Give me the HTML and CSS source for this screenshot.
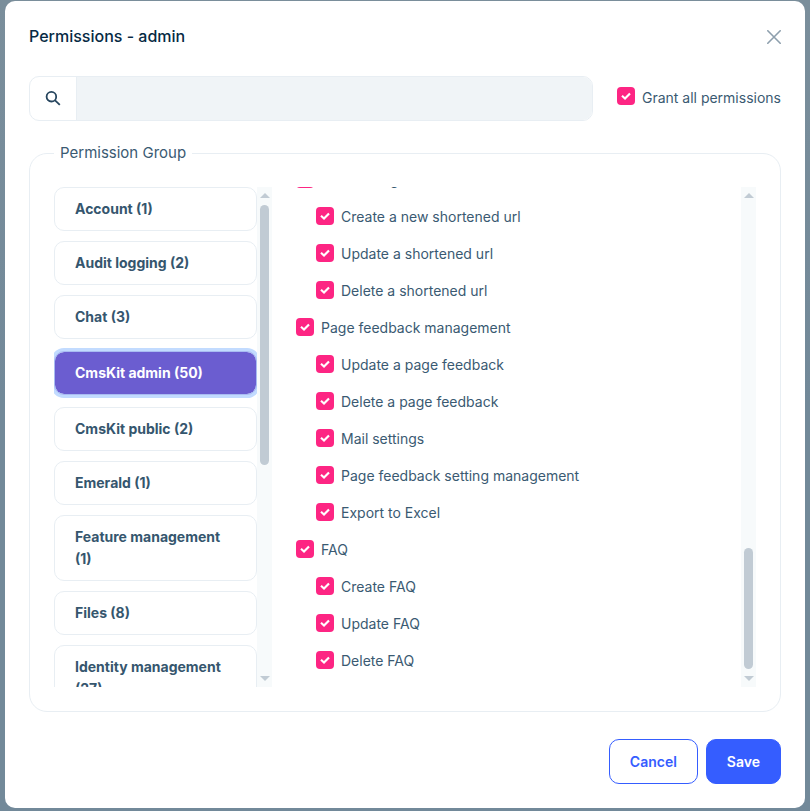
FILE: index.html
```html
<!DOCTYPE html>
<html lang="en">
<head>
    <meta charset="UTF-8">
    <meta name="viewport" content="width=device-width, initial-scale=1.0">
    <title>Permissions - admin</title>
    <link rel="stylesheet" href="styles.css">
</head>
<body>
    <div class="modal" role="dialog" aria-labelledby="modalTitle">
        <header class="modal-header">
            <h1 id="modalTitle" class="modal-title">Permissions - admin</h1>
            <button type="button" class="btn-close" aria-label="Close">
                <svg width="14" height="14" viewBox="0 0 14 14" fill="none" stroke="currentColor" stroke-width="1.6" stroke-linecap="round">
                    <path d="M.8.8l12.4 12.4M13.2.8L.8 13.2"></path>
                </svg>
            </button>
        </header>

        <form class="modal-form">
            <div class="toolbar">
                <div class="search">
                    <label class="search-icon" for="search" aria-label="Search">
                        <svg width="16" height="16" viewBox="0 0 16 16" fill="none" stroke="currentColor" stroke-width="1.8">
                            <circle cx="6.4" cy="5.7" r="4.8"></circle>
                            <path d="M9.8 9.1l5 4.8"></path>
                        </svg>
                    </label>
                    <input type="text" id="search" class="search-input">
                </div>
                <label class="check"><input type="checkbox" checked>Grant all permissions</label>
            </div>

            <fieldset class="group">
                <legend>Permission Group</legend>
                <div class="panes">
                    <div class="pane">
                        <div class="tabs">
                            <button type="button" class="tab">Account (1)</button>
                            <button type="button" class="tab">Audit logging (2)</button>
                            <button type="button" class="tab">Chat (3)</button>
                            <button type="button" class="tab active">CmsKit admin (50)</button>
                            <button type="button" class="tab">CmsKit public (2)</button>
                            <button type="button" class="tab">Emerald (1)</button>
                            <button type="button" class="tab">Feature management (1)</button>
                            <button type="button" class="tab">Files (8)</button>
                            <button type="button" class="tab">Identity management (27)</button>
                        </div>
                        <div class="scrollbar" aria-hidden="true">
                            <span class="arrow up"></span>
                            <div class="track"><div class="thumb"></div></div>
                            <span class="arrow down"></span>
                        </div>
                    </div>

                    <div class="pane">
                        <!-- scrolled to the end -->
                        <div class="permissions">
                            <label class="check"><input type="checkbox" checked>Url shorting</label>
                            <label class="check child"><input type="checkbox" checked>Create a new shortened url</label>
                            <label class="check child"><input type="checkbox" checked>Update a shortened url</label>
                            <label class="check child"><input type="checkbox" checked>Delete a shortened url</label>
                            <label class="check"><input type="checkbox" checked>Page feedback management</label>
                            <label class="check child"><input type="checkbox" checked>Update a page feedback</label>
                            <label class="check child"><input type="checkbox" checked>Delete a page feedback</label>
                            <label class="check child"><input type="checkbox" checked>Mail settings</label>
                            <label class="check child"><input type="checkbox" checked>Page feedback setting management</label>
                            <label class="check child"><input type="checkbox" checked>Export to Excel</label>
                            <label class="check"><input type="checkbox" checked>FAQ</label>
                            <label class="check child"><input type="checkbox" checked>Create FAQ</label>
                            <label class="check child"><input type="checkbox" checked>Update FAQ</label>
                            <label class="check child"><input type="checkbox" checked>Delete FAQ</label>
                        </div>
                        <div class="scrollbar" aria-hidden="true">
                            <span class="arrow up"></span>
                            <div class="track at-end"><div class="thumb short"></div></div>
                            <span class="arrow down"></span>
                        </div>
                    </div>
                </div>
            </fieldset>

            <footer class="modal-footer">
                <button type="button" class="btn btn-outline">Cancel</button>
                <button type="submit" class="btn btn-primary">Save</button>
            </footer>
        </form>
    </div>
</body>
</html>
```

FILE: styles.css
```css
* {
    box-sizing: border-box;
}
body {
    margin: 0;
    padding: 1px 5px 3px;
    background: linear-gradient(#7a8e9b, #728999 50%);
    color: #3a5a72;
    font-family: Inter, sans-serif;
    font-size: 14px;
    line-height: 21px;
}
button, input {
    font: inherit;
    color: inherit;
}
.modal {
    background-color: #fff;
    border-radius: 10px;
    padding: 24px;
}
.modal-header {
    display: flex;
    align-items: center;
    justify-content: space-between;
    margin-bottom: 28px;
}
.modal-title {
    margin: 0;
    color: #062a44;
    font-size: 16px;
    font-weight: 500;
    line-height: 23px;
}
.btn-close {
    display: flex;
    padding: 0;
    border: none;
    background: none;
    color: #8d9fad;
    cursor: pointer;
}
.toolbar {
    display: flex;
    align-items: center;
    gap: 24px;
    margin-bottom: 22px;
}
.toolbar .check {
    padding-bottom: 3px;
}
.search {
    flex: 1;
    display: flex;
    height: 45px;
    border: 1px solid #e8eef3;
    border-radius: 10px;
    overflow: hidden;
}
.search-icon {
    display: flex;
    align-items: center;
    justify-content: center;
    width: 47px;
    border-right: 1px solid #e8eef3;
    color: #26455e;
}
.search-input {
    flex: 1;
    min-width: 0;
    padding: 0 20px;
    border: none;
    outline: none;
    background-color: #f0f4f7;
}

/* Checkboxes */
.check {
    display: flex;
    align-items: center;
    gap: 7px;
}
.check input {
    appearance: none;
    flex: none;
    width: 18px;
    height: 18px;
    margin: 0 0 2px;
    border-radius: 4px;
    background: #fd2583 url("data:image/svg+xml,%3Csvg xmlns='http://www.w3.org/2000/svg' viewBox='0 0 18 18'%3E%3Cpath d='M5 8.8l3 2.8 5-5.2' fill='none' stroke='%23fff' stroke-width='2.1'/%3E%3C/svg%3E") center / 18px no-repeat;
}
.child {
    padding-left: 20px;
}

/* Permission group */
.group {
    min-width: 0;
    margin: 0;
    padding: 24px;
    border: 1px solid #e8eef3;
    border-radius: 18px;
}
.group legend {
    padding: 0 6px;
    font-size: 15px;
    line-height: 20px;
}
.panes {
    display: grid;
    grid-template-columns: 218px 1fr;
    gap: 24px;
    height: 500px;
}
.pane {
    display: flex;
    min-height: 0;
}
.tabs {
    flex: 1;
    display: flex;
    flex-direction: column;
    gap: 10px;
    overflow: hidden;
}
.tab {
    flex: none;
    padding: 10px 20px;
    border: 1px solid #e8eef3;
    border-radius: 10px;
    background-color: #fff;
    color: #35566e;
    font-weight: 700;
    line-height: 22px;
    text-align: left;
    cursor: pointer;
}
.tab.active {
    margin: 2px 0;
    border-color: #a9bcf2;
    background-color: #6b5dd0;
    background-clip: padding-box;
    box-shadow: 0 0 0 3px #c2dbff;
    color: #fff;
}
.permissions {
    flex: 1;
    display: flex;
    flex-direction: column;
    justify-content: flex-end;
    gap: 16px;
    padding-bottom: 16px;
    overflow: hidden;
}

/* Scrollbars */
.scrollbar {
    flex: none;
    display: flex;
    flex-direction: column;
    align-items: center;
    width: 15px;
    padding: 6px 0;
    background-color: #f7fafb;
}
.arrow {
    border: 5px solid transparent;
}
.arrow.up {
    border-top: none;
    border-bottom-color: #c1cbd4;
}
.arrow.down {
    border-bottom: none;
    border-top-color: #c1cbd4;
}
.track {
    flex: 1;
    display: flex;
    flex-direction: column;
    width: 9px;
    padding: 7px 0;
}
.track.at-end {
    justify-content: flex-end;
}
.thumb {
    height: 56%;
    border-radius: 5px;
    background-color: #c1cbd4;
}
.thumb.short {
    height: 26%;
}

/* Footer */
.modal-footer {
    display: flex;
    justify-content: flex-end;
    gap: 8px;
    margin-top: 27px;
}
.btn {
    padding: 11px 20px;
    border: 1px solid #355dff;
    border-radius: 10px;
    font-weight: 600;
    cursor: pointer;
}
.btn-outline {
    background-color: #fff;
    color: #355dff;
}
.btn-primary {
    background-color: #355dff;
    color: #fff;
}
```
